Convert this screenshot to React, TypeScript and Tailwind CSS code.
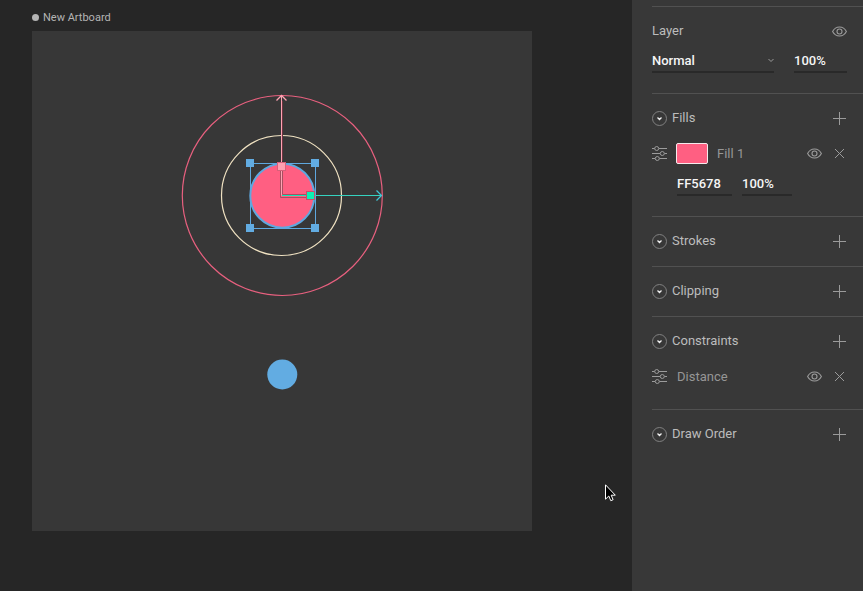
import type { ReactNode } from "react";

const ICON_BUTTON = "flex size-[15px] shrink-0 items-center justify-center text-[#9b9b9b]";
const FIELD =
  "h-6 min-w-0 appearance-none rounded-none border-b-2 border-[#292929] bg-transparent p-0 text-[13px] font-medium text-[#f5f5f5] outline-none";

function EyeIcon() {
  return (
    <svg width="15" height="11" viewBox="0 0 15 11" fill="none" stroke="currentColor" strokeWidth="1.100" aria-hidden="true">
      <path d="M.6 5.500C2.200 2.500 4.600 1 7.500 1s5.300 1.500 6.900 4.500C12.800 8.500 10.400 10 7.500 10S2.200 8.500.6 5.500Z" />
      <circle cx="7.500" cy="5.500" r="2.500" />
    </svg>
  );
}

function PlusIcon() {
  return (
    <svg width="15" height="15" viewBox="0 0 15 15" fill="none" stroke="currentColor" aria-hidden="true">
      <path d="M7.500 1v13M1 7.500h13" />
    </svg>
  );
}

function CrossIcon() {
  return (
    <svg width="15" height="15" viewBox="0 0 15 15" fill="none" stroke="currentColor" aria-hidden="true">
      <path d="m3 3 9 9M12 3l-9 9" />
    </svg>
  );
}

function CollapseIcon() {
  return (
    <svg width="15" height="15" viewBox="0 0 15 15" fill="none" aria-hidden="true">
      <circle cx="7.500" cy="7.500" r="7" stroke="#808080" />
      <path d="m5.500 6.500 2 2 2-2" stroke="#f2f2f2" strokeWidth="1.300" />
    </svg>
  );
}

function SlidersIcon() {
  return (
    <svg width="15" height="15" viewBox="0 0 15 15" fill="none" stroke="currentColor" aria-hidden="true">
      <path d="M0 2.500h2.500M7 2.500h8M0 7.500h8M12.500 7.500H15M0 12.500h3M7.500 12.500H15" />
      <circle cx="4.700" cy="2.500" r="2" />
      <circle cx="10.300" cy="7.500" r="2" />
      <circle cx="5.300" cy="12.500" r="2" />
    </svg>
  );
}

function Section({ title, className = "", children }: { title: string; className?: string; children?: ReactNode }) {
  return (
    <section className={`border-t border-[#515151] pt-2 pr-4 ${className}`}>
      <header className="flex h-[33px] items-center">
        <button type="button" className="flex items-center gap-[5px]" aria-expanded="true">
          <CollapseIcon />
          <h2 className="pb-px text-[13px] leading-4">{title}</h2>
        </button>
        <button type="button" aria-label={`Add to ${title}`} className={`${ICON_BUTTON} ml-auto`}>
          <PlusIcon />
        </button>
      </header>
      {children}
    </section>
  );
}

function ItemRow({ name, swatch }: { name: string; swatch?: boolean }) {
  return (
    <div className="flex h-[37px] items-center">
      <button type="button" aria-label={`${name} options`} className={ICON_BUTTON}>
        <SlidersIcon />
      </button>
      {swatch && (
        <button
          type="button"
          aria-label={`${name} colour`}
          className="ml-[9px] -mr-px h-[21px] w-8 shrink-0 rounded-[2px] border border-[#f6e9ec] bg-[#ff5f82]"
        />
      )}
      <span className="pl-[10px] text-[13px] leading-4 text-[#969696]">{name}</span>
      <button type="button" aria-label={`Toggle ${name}`} className={`${ICON_BUTTON} ml-auto`}>
        <EyeIcon />
      </button>
      <button type="button" aria-label={`Remove ${name}`} className={`${ICON_BUTTON} ml-[10px]`}>
        <CrossIcon />
      </button>
    </div>
  );
}

function Inspector() {
  return (
    <aside className="w-[231px] shrink-0 bg-[#383838] pt-[6px] pl-5 text-[#bcbcbc]">
      <section className="border-t border-[#515151] pt-2 pr-4 pb-5">
        <header className="flex h-[33px] items-center justify-between">
          <h2 className="pb-px text-[13px] leading-4">Layer</h2>
          <button type="button" aria-label="Toggle layer" className={ICON_BUTTON}>
            <EyeIcon />
          </button>
        </header>
        <div className="mt-px flex gap-5">
          <label className="relative flex min-w-0 flex-1">
            <select aria-label="Blend mode" className={`${FIELD} w-full pt-px`} defaultValue="Normal">
              <option>Normal</option>
            </select>
            <svg className="pointer-events-none absolute top-[9px] right-0" width="6" height="5" viewBox="0 0 6 5" fill="none" stroke="#9a9a9a" aria-hidden="true">
              <path d="m.5 1 2.500 2.500L5.500 1" />
            </svg>
          </label>
          <input aria-label="Layer opacity" className={`${FIELD} w-[53px]`} defaultValue="100%" />
        </div>
      </section>

      <Section title="Fills" className="pb-5">
        <ItemRow name="Fill 1" swatch />
        <div className="flex gap-[10px] pl-[25px]">
          <input aria-label="Fill hex" className={`${FIELD} w-[55px]`} defaultValue="FF5678" />
          <input aria-label="Fill opacity" className={`${FIELD} w-[50px]`} defaultValue="100%" />
        </div>
      </Section>
      <Section title="Strokes" className="pb-2" />
      <Section title="Clipping" className="pb-2" />
      <Section title="Constraints" className="pb-[14px]">
        <ItemRow name="Distance" />
      </Section>
      <Section title="Draw Order" className="pb-2" />
    </aside>
  );
}

function Artwork() {
  return (
    <svg className="block" width="500" height="500" viewBox="0 0 500 500" fill="none" role="img" aria-label="Artboard contents">
      <circle cx="250.300" cy="164.500" r="100" stroke="#e8607f" strokeWidth="1.200" />
      <circle cx="249.500" cy="164.500" r="60" stroke="#f0e2c2" strokeWidth="1.200" />
      <circle cx="250.300" cy="164.700" r="32" fill="#ff5f82" stroke="#5fa8df" strokeWidth="2" />
      <circle cx="250.300" cy="343.500" r="15" fill="#62ace2" />

      <rect x="218.500" y="132.500" width="65" height="65" stroke="#5fa8df" />
      <path d="M214 128h8v8h-8zM279 128h8v8h-8zM214 193h8v8h-8zM279 193h8v8h-8z" fill="#62ace2" />

      <path d="M250.500 70v60" stroke="#6b3440" />
      <path d="M248.500 139v27.500H275M250.500 139v24.500H275" stroke="#a84f60" />
      <path d="M249.500 64.500v100" stroke="#ffa3b3" />
      <path d="m244.500 69.500 5-5 5 5" stroke="#ffa3b3" strokeWidth="1.300" />
      <rect x="245.500" y="131.500" width="8" height="8" stroke="#d8607a" />
      <rect x="246" y="132" width="7" height="7" fill="#ff9fb0" />

      <path d="M250 164.500h25" stroke="#10e8b8" />
      <path d="M282 164.500h68" stroke="#35d3c0" />
      <path d="m344.500 159.500 5 5-5 5" stroke="#3fc6d6" strokeWidth="1.300" />
      <rect x="274.500" y="160.500" width="8" height="8" stroke="#c4506c" />
      <rect x="275" y="161" width="7" height="7" fill="#0cf0b4" />
    </svg>
  );
}

export default function App() {
  return (
    <div className="relative flex min-h-screen bg-[#262626] font-[Roboto,sans-serif]">
      <main className="min-w-0 flex-1 overflow-hidden pl-8">
        <div className="flex h-[31px] items-center gap-1 pt-1 text-[#b4b4b4]">
          <span className="size-[7px] rounded-full bg-current" />
          <h1 className="text-[11px] leading-4">New Artboard</h1>
        </div>
        <div className="w-[500px] bg-[#373737]">
          <Artwork />
        </div>
      </main>
      <Inspector />
      <svg className="pointer-events-none absolute top-[484px] left-[605px]" width="12" height="18" viewBox="0 0 12 18" aria-hidden="true">
        <path d="M.5.800v14.400l3.300-3.200 2 4.700 2.300-1-1.900-4.500H10.300Z" fill="#000" stroke="#fff" />
      </svg>
    </div>
  );
}
